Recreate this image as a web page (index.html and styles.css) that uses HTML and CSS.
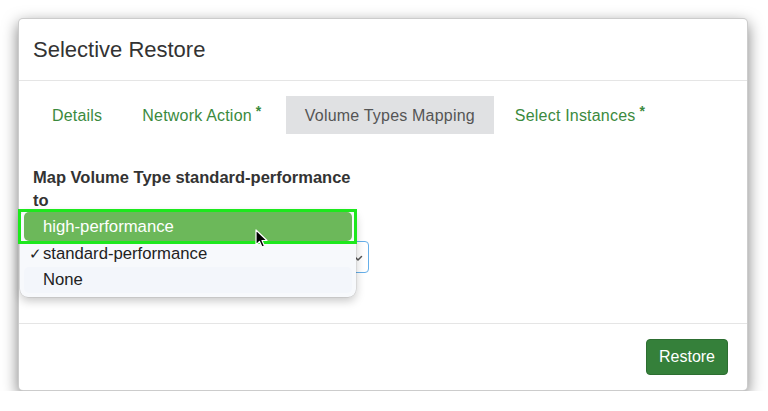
FILE: index.html
```html
<!DOCTYPE html>
<html>
<head>
<meta charset="utf-8">
<link rel="stylesheet" href="styles.css">
</head>
<body>
<div class="modal">
  <div class="modal-header"><h4 class="title">Selective Restore</h4></div>
  <div class="modal-body">
    <ul class="tabs">
      <li class="tab">Details</li>
      <li class="tab">Network Action<sup class="req">*</sup></li>
      <li class="tab active">Volume Types Mapping</li>
      <li class="tab">Select Instances<sup class="req">*</sup></li>
    </ul>
    <div class="form-group">
      <label class="label">Map Volume Type standard-performance to</label>
      <div class="select-wrap">
        <div class="select">
          <svg class="chev" width="10" height="7" viewBox="0 0 10 7"><path d="M1.5 1.5 L5 5 L8.5 1.5" fill="none" stroke="#555" stroke-width="1.5" stroke-linecap="round" stroke-linejoin="round"/></svg>
        </div>
        <div class="menu">
          <div class="item hl"><span class="item-text">high-performance</span></div>
          <div class="item"><span class="check">✓</span><span class="item-text">standard-performance</span></div>
          <div class="item none"><span class="item-text">None</span></div>
        </div>
        <div class="outline"></div>
        <svg class="cursor" width="14" height="20" viewBox="0 0 14 20"><path d="M1 1 L1 16 L4.5 12.5 L7 18 L9.5 17 L7 11.5 L12 11.5 Z" fill="#000" stroke="#fff" stroke-width="1.2" stroke-linejoin="round"/></svg>
      </div>
    </div>
  </div>
  <div class="modal-footer"><button class="btn">Restore</button></div>
</div>
</body>
</html>
```
FILE: styles.css
```css
* { box-sizing: border-box; }
html, body { margin: 0; padding: 0; background: #fff; }
body {
  font-family: "Liberation Sans", Arial, Helvetica, sans-serif;
  color: #333;
  padding: 18px 20px 0 18px;
}
.modal {
  width: 730px;
  height: 373px;
  background: #fff;
  border-radius: 5px;
  border: 1px solid rgba(0,0,0,0.2);
  box-shadow: 0 5px 15px rgba(0,0,0,0.5);
  display: flex;
  flex-direction: column;
}
.modal-header {
  height: 62px;
  flex: none;
  border-bottom: 1px solid #e5e5e5;
  padding: 0 14px;
  display: flex;
  align-items: center;
}
.title { margin: 0; font-size: 22px; font-weight: 400; color: #333; padding-top: 1px; }
.modal-body {
  height: 243px;
  flex: none;
  padding: 15px 14px 0;
  border-bottom: 1px solid #e5e5e5;
}
.tabs {
  list-style: none;
  margin: 0;
  padding: 0;
  display: flex;
  gap: 2px;
}
.tab {
  height: 38px;
  padding: 2px 19px 0;
  display: flex;
  align-items: center;
  font-size: 16px;
  letter-spacing: 0.2px;
  color: #3b8a3e;
  white-space: nowrap;
}
.tab.active { background: #e0e1e3; color: #555; }
.req { font-size: 14px; font-weight: 700; color: #3b8a3e; align-self: flex-start; margin-top: 5px; margin-left: 4px; width: 9px; }
.form-group { width: 336px; margin-top: 32px; }
.label {
  display: block;
  width: 330px;
  font-size: 16.5px;
  font-weight: 700;
  line-height: 23px;
  color: #333;
}
.select-wrap { position: relative; margin-top: 29px; height: 32px; }
.select {
  height: 32px;
  border: 1px solid #66afe9;
  border-radius: 4px;
  display: flex;
  align-items: center;
  justify-content: flex-end;
  padding: 0 5px 0 10px;
  background: #fff;
}
.chev { margin-top: 2px; }
.menu {
  position: absolute;
  left: -13px;
  top: -31px;
  width: 336px;
  height: 87px;
  background: #f7f9fc;
  border-radius: 8px;
  box-shadow: 0 4px 10px rgba(0,0,0,0.22), 0 0 0 0.5px rgba(0,0,0,0.12);
  padding: 2px 4px;
}
.item {
  height: 26px;
  display: flex;
  align-items: center;
  font-size: 16.7px;
  color: #222;
  padding-left: 19px;
  position: relative;
  border-radius: 5px;
}
.item.hl {
  height: 29px;
  background: #6cb85a;
  color: #fff;
}
.item.none { background: #f3f6fb; }
.check { position: absolute; left: 5px; font-size: 15px; }
.outline {
  position: absolute;
  left: -15px;
  top: -32px;
  width: 339px;
  height: 35px;
  border: 3px solid #1de81d;
}
.cursor { position: absolute; left: 222px; top: -12px; }
.modal-footer {
  height: 66px;
  flex: none;
  padding: 15px 19px 15px 14px;
  display: flex;
  justify-content: flex-end;
  align-items: flex-start;
}
.btn {
  height: 36px;
  width: 82px;
  background: #35803a;
  color: #fff;
  border: 1px solid #2d6e31;
  border-radius: 4px;
  font-family: inherit;
  font-size: 16px;
}
```
